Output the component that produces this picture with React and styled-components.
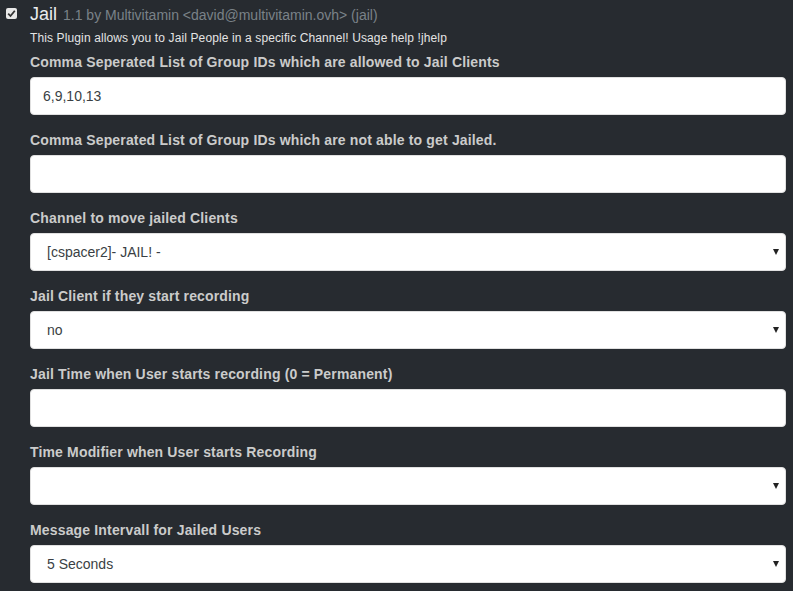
import React from 'react';
import styled, { createGlobalStyle } from 'styled-components';

const GlobalStyle = createGlobalStyle`
  html, body {
    margin: 0;
    padding: 0;
    background: #272b30;
  }
  body {
    font-family: "Liberation Sans", Arial, sans-serif;
    color: #c8c8c8;
  }
`;

const Plugin = styled.div`
  display: grid;
  grid-template-columns: 30px 1fr;
  padding-right: 7px;
  padding-top: 4px;
`;

const CheckCol = styled.div`
  padding-left: 6px;
  padding-top: 4px;
`;

const Check = styled.div`
  width: 11px;
  height: 11px;
  background: #e8e8e8;
  border-radius: 2px;
  display: flex;
  align-items: center;
  justify-content: center;
`;

const Body = styled.div`
  display: flex;
  flex-direction: column;
`;

const Title = styled.div`
  font-size: 18px;
  line-height: 20px;
  color: #e9ecef;
`;

const Meta = styled.span`
  font-size: 14px;
  color: #7a8288;
  margin-left: 1px;
`;

const Desc = styled.div`
  font-size: 12px;
  line-height: 18px;
  margin-top: 4px;
  letter-spacing: 0.12px;
  color: #e4e4e4;
`;

const Group = styled.div`
  display: flex;
  flex-direction: column;
  margin-top: ${p => (p.$first ? '5px' : '15px')};
`;

const Label = styled.label`
  font-size: 14px;
  font-weight: bold;
  line-height: 20px;
  margin-bottom: 5px;
  letter-spacing: 0.16px;
  color: #cbcbcb;
`;

const Input = styled.input`
  box-sizing: border-box;
  height: 38px;
  width: 100%;
  border: 1px solid #e0e0e0;
  border-radius: 4px;
  background: #fff;
  padding: 0 12px;
  font-family: "Liberation Sans", Arial, sans-serif;
  font-size: 14px;
  color: #3a3f44;
  outline: none;
`;

const SelectWrap = styled.div`
  position: relative;
`;

const Select = styled.select`
  box-sizing: border-box;
  appearance: none;
  -webkit-appearance: none;
  height: 38px;
  width: 100%;
  border: 1px solid #e0e0e0;
  border-radius: 4px;
  background: #fff;
  padding: 0 12px 0 16px;
  font-family: "Liberation Sans", Arial, sans-serif;
  font-size: 14px;
  color: #3a3f44;
  outline: none;
`;

const Caret = styled.span`
  position: absolute;
  right: 7px;
  top: 16px;
  width: 0;
  height: 0;
  border-left: 3.5px solid transparent;
  border-right: 3.5px solid transparent;
  border-top: 6px solid #222;
  pointer-events: none;
`;

const fields = [
  { label: 'Comma Seperated List of Group IDs which are allowed to Jail Clients', type: 'input', value: '6,9,10,13' },
  { label: 'Comma Seperated List of Group IDs which are not able to get Jailed.', type: 'input', value: '' },
  { label: 'Channel to move jailed Clients', type: 'select', value: '[cspacer2]- JAIL! -' },
  { label: 'Jail Client if they start recording', type: 'select', value: 'no' },
  { label: 'Jail Time when User starts recording (0 = Permanent)', type: 'input', value: '' },
  { label: 'Time Modifier when User starts Recording', type: 'select', value: '' },
  { label: 'Message Intervall for Jailed Users', type: 'select', value: '5 Seconds' },
];

function Field({ field, first }) {
  return (
    <Group $first={first}>
      <Label>{field.label}</Label>
      {field.type === 'input' ? (
        <Input defaultValue={field.value} />
      ) : (
        <SelectWrap>
          <Select defaultValue={field.value}>
            <option value={field.value}>{field.value}</option>
          </Select>
          <Caret />
        </SelectWrap>
      )}
    </Group>
  );
}

export default function App() {
  return (
    <>
      <GlobalStyle />
      <Plugin>
        <CheckCol>
          <Check>
            <svg width="9" height="9" viewBox="0 0 9 9">
              <path d="M1.2 4.6 L3.5 7 L7.8 1.8" fill="none" stroke="#333" strokeWidth="1.8" />
            </svg>
          </Check>
        </CheckCol>
        <Body>
          <Title>
            Jail <Meta>1.1 by Multivitamin &lt;david@multivitamin.ovh&gt; (jail)</Meta>
          </Title>
          <Desc>This Plugin allows you to Jail People in a specific Channel! Usage help !jhelp</Desc>
          {fields.map((f, i) => (
            <Field key={i} field={f} first={i === 0} />
          ))}
        </Body>
      </Plugin>
    </>
  );
}
